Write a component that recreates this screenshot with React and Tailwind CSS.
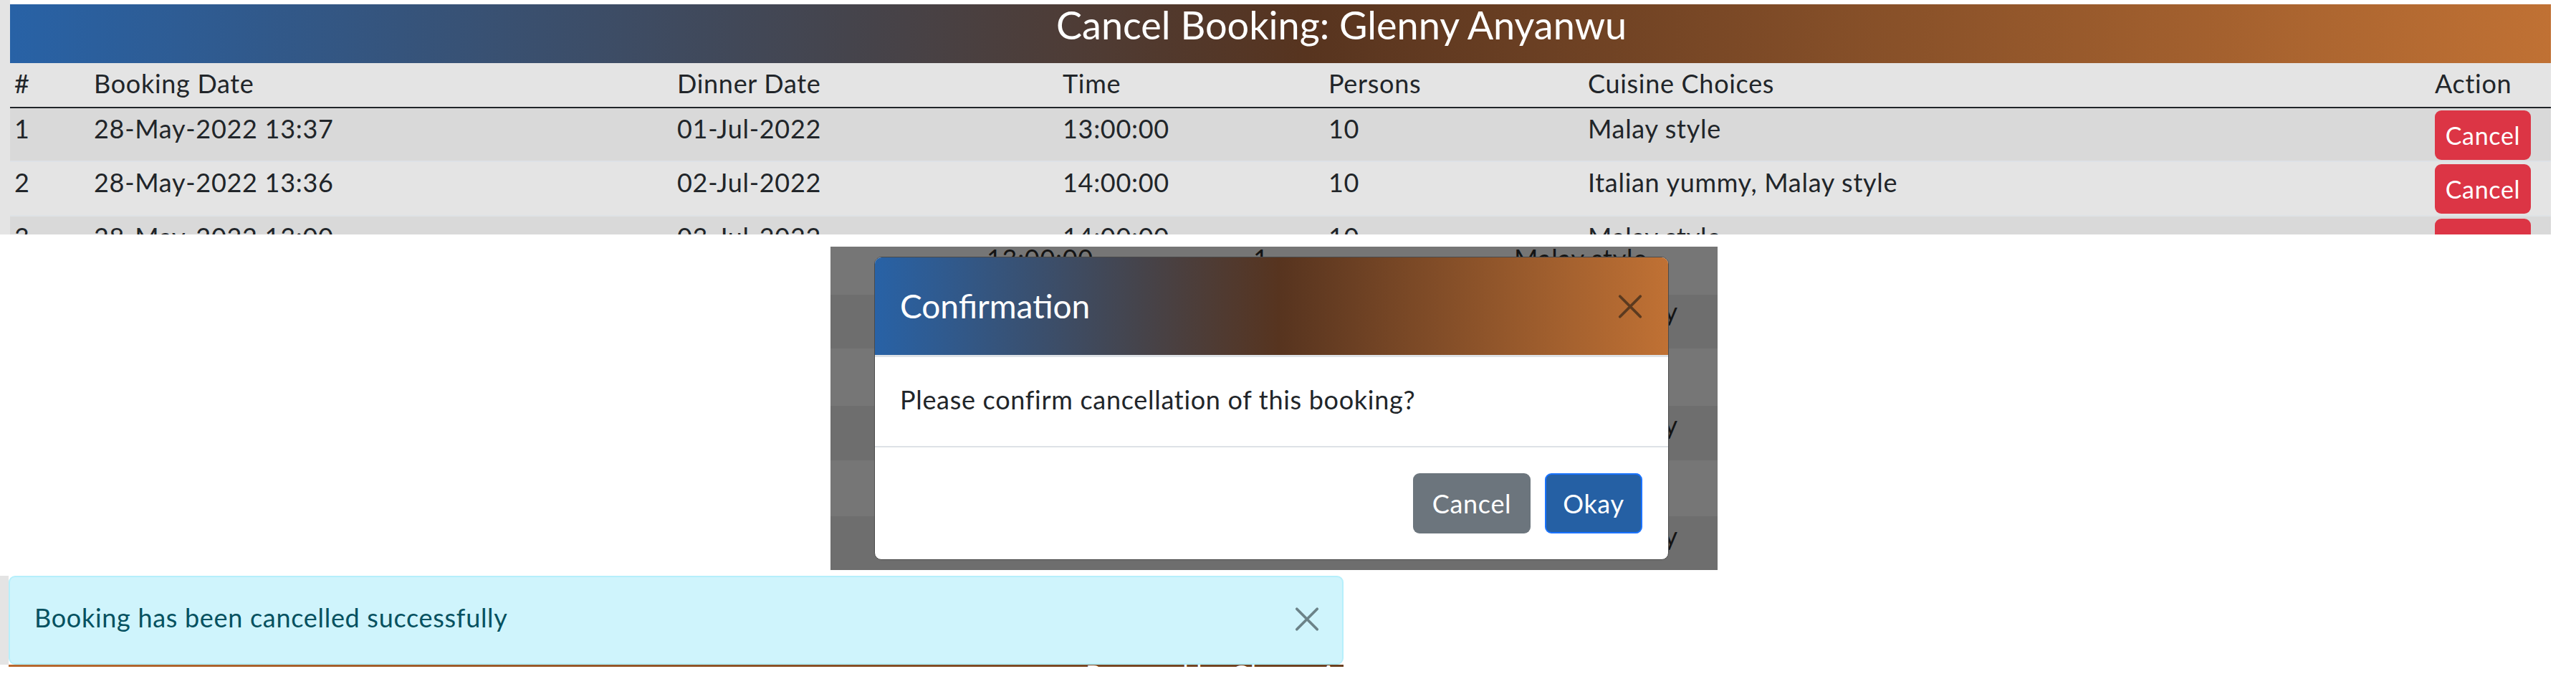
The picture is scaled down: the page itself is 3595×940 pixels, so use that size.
import React from 'react';

const FONT = "font-[Lato,'Open_Sans',sans-serif]";
const GRADIENT = 'bg-[linear-gradient(90deg,#2862a6_0%,#45444c_33%,#57341f_51%,#c07134_100%)]';
const COLS = 'grid grid-cols-[111px_814px_538px_371px_362px_1182px_1fr]';

const bookings = [
  { id: '1', booked: '28-May-2022 13:37', dinner: '01-Jul-2022', time: '13:00:00', persons: '10', cuisine: 'Malay style', bg: 'bg-[#d9d9d9]', h: 'h-[75px]' },
  { id: '2', booked: '28-May-2022 13:36', dinner: '02-Jul-2022', time: '14:00:00', persons: '10', cuisine: 'Italian yummy, Malay style', bg: 'bg-[#e4e4e4]', h: 'h-[76px]' },
  { id: '3', booked: '28-May-2022 13:00', dinner: '03-Jul-2022', time: '14:00:00', persons: '10', cuisine: 'Malay style', bg: 'bg-[#d9d9d9]', h: 'h-[76px]' },
];

// dimmed rows seen through the backdrop (only what peeks out round the modal)
const shadowRows = [
  { h: 'h-[67px]', bg: 'bg-[#767676]', mt: 'mt-[-11px]', time: '13:00:00', persons: '1', cuisine: 'Malay style' },
  { h: 'h-[75px]', bg: 'bg-[#6e6e6e]', mt: 'mt-[-4px]', cuisine: 'Italian yummy' },
  { h: 'h-[80px]', bg: 'bg-[#767676]' },
  { h: 'h-[76px]', bg: 'bg-[#6e6e6e]', mt: 'mt-[-1px]', cuisine: 'Italian yummy' },
  { h: 'h-[78px]', bg: 'bg-[#767676]' },
  { h: 'h-[75px]', bg: 'bg-[#6e6e6e]', mt: 'mt-[0px]', cuisine: 'Italian yummy' },
];

function CloseX({ className }) {
  return (
    <svg viewBox="0 0 16 16" className={className} fill="none" stroke="currentColor" strokeWidth="1.7" strokeLinecap="round">
      <path d="M1.5 1.5l13 13M14.5 1.5l-13 13" />
    </svg>
  );
}

export default function App() {
  return (
    <div className={`relative w-[3595px] h-[940px] overflow-hidden bg-white text-[#212529] tracking-[0.7px] ${FONT}`}>
      {/* booking table */}
      <div className="flex h-[327px] overflow-hidden">
        <div className="w-[14px] shrink-0 bg-[#e4e4e4]" />
        <div className="w-[3546px] shrink-0 flex flex-col">
          <div className="h-[6px] shrink-0 bg-white" />
          <div className={`h-[82px] shrink-0 ${GRADIENT} pl-[1460px]`}>
            <h1 className="text-[54px] leading-[58px] tracking-normal text-white whitespace-nowrap">Cancel Booking: Glenny Anyanwu</h1>
          </div>
          <div className="shrink-0 bg-[#e4e4e4]">
            <div className={`${COLS} h-[63px] border-b-2 border-[#212529] text-[36px] leading-[54px]`}>
              {['#', 'Booking Date', 'Dinner Date', 'Time', 'Persons', 'Cuisine Choices', 'Action'].map((t) => (
                <div key={t} className="pl-[6px] pt-[1px]">{t}</div>
              ))}
            </div>
            {bookings.map((b) => (
              <div key={b.id} className={`${COLS} ${b.h} ${b.bg} border-b-2 border-[#dee2e6] text-[36px] leading-[54px]`}>
                <div className="pl-[6px] pt-[1px]">{b.id}</div>
                <div className="pl-[6px] pt-[1px]">{b.booked}</div>
                <div className="pl-[6px] pt-[1px]">{b.dinner}</div>
                <div className="pl-[6px] pt-[1px]">{b.time}</div>
                <div className="pl-[6px] pt-[1px]">{b.persons}</div>
                <div className="pl-[6px] pt-[1px]">{b.cuisine}</div>
                <div className="pl-[6px] pt-[3px]">
                  <button className="w-[134px] h-[69px] rounded-[9px] bg-[#dc3545] text-white text-[34px] leading-[47px]">Cancel</button>
                </div>
              </div>
            ))}
          </div>
        </div>
      </div>

      <div className="h-[476px]" />

      {/* toast */}
      <div className="flex h-[124px]">
        <div className="w-[12px] bg-[#e4e4e4]" />
        <div className="w-[1863px] flex items-start justify-between rounded-[9px] border-2 border-[#b6effb] bg-[#cff4fc] pl-[34px] pr-[31px] pt-[29px]">
          <span className="text-[36px] leading-[54px] text-[#055160]">Booking has been cancelled successfully</span>
          <CloseX className="w-[36px] h-[35px] mt-[12px] text-[#6b8288]" />
        </div>
      </div>
      <div className="ml-[12px] w-[1863px] h-[3px] overflow-hidden bg-[linear-gradient(90deg,#b8692f,#6b4020)]">
        <div className="pl-[1503px] mt-[-14px] text-[36px] leading-[54px] text-white whitespace-nowrap">Powered by Glenny Anyanwu</div>
      </div>

      {/* modal backdrop */}
      <div className="absolute left-[1159px] top-[344px] w-[1238px] h-[451px] overflow-hidden text-[#141414]">
        {shadowRows.map((r, i) => (
          <div key={i} className={`${r.h} ${r.bg} grid grid-cols-[218px_372px_364px_1fr] text-[36px] leading-[54px]`}>
            <div />
            <div className={r.mt}>{r.time}</div>
            <div className={r.mt}>{r.persons}</div>
            <div className={`${r.mt} whitespace-nowrap`}>{r.cuisine}</div>
          </div>
        ))}
      </div>

      {/* confirmation modal */}
      <div className="absolute left-[1220px] top-[358px] w-[1109px] h-[423px] flex flex-col overflow-hidden rounded-[10px] border border-[#4a4a4a] bg-white">
        <div className={`h-[139px] shrink-0 flex items-start justify-between ${GRADIENT} pl-[35px] pr-[35px] pt-[40px] border-b-[3px] border-[#dee2e6]`}>
          <h5 className="text-[46px] leading-[55px] tracking-normal text-white">Confirmation</h5>
          <CloseX className="w-[36px] h-[35px] mt-[11px] text-[#5b3a1f]" />
        </div>
        <div className="h-[126px] shrink-0 pl-[35px] pt-[32px] border-b-2 border-[#dee2e6] text-[36px] leading-[54px]">
          Please confirm cancellation of this booking?
        </div>
        <div className="flex-1 flex justify-end items-start gap-[20px] pt-[36px] pr-[36px]">
          <button className="w-[164px] h-[84px] rounded-[9px] bg-[#6c757d] text-white text-[36px] leading-[54px]">Cancel</button>
          <button className="w-[136px] h-[84px] rounded-[9px] bg-[#2560a4] border-2 border-[#1a73ff] text-white text-[36px] leading-[54px]">Okay</button>
        </div>
      </div>
    </div>
  );
}
